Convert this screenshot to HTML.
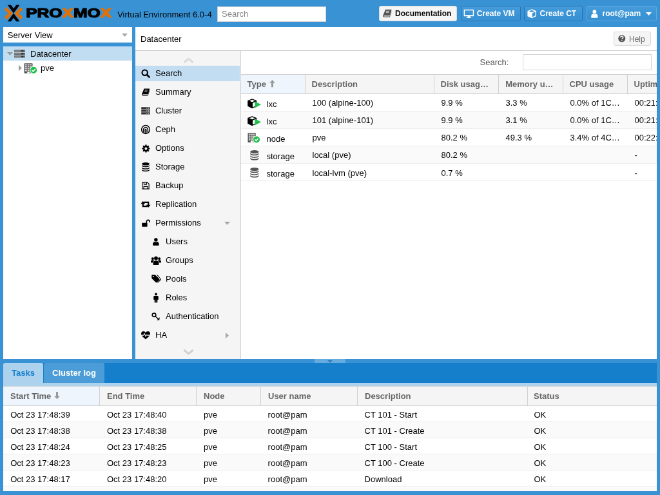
<!DOCTYPE html>
<html><head><meta charset="utf-8"><title>pve - Proxmox Virtual Environment</title>
<style>
html,body{margin:0;padding:0;width:660px;height:495px;overflow:hidden;background:#3892d4}
#r{will-change:transform;position:absolute;left:0;top:0;width:1024px;height:768px;transform:scale(.64453125);transform-origin:0 0;background:#3892d4;font-family:"Liberation Sans",sans-serif;font-size:13px;color:#000;overflow:hidden}
#r div,#r span{position:absolute;box-sizing:border-box;white-space:nowrap}
#r svg{position:absolute;overflow:visible}
.btn{border-radius:3px;font-size:12px;font-weight:bold;line-height:16px}
.bb{background:linear-gradient(#479cda,#3892d4 70%);border:1px solid #2675b8;color:#fff}
.bg{background:#f5f5f5;border:1px solid #d8d8d8;color:#0a0a0a}
.t{line-height:15px}
.hd{background:#f5f5f5;border-right:1px solid #d0d0d0;color:#666;font-weight:bold;height:28.500px;top:0}
.hd span{left:10px;top:7.200px;line-height:15px}
.row{left:0;width:100%;border-bottom:1px solid #ededed}
.alt{background:#fafafa}
.c{line-height:15px}
.ni{left:0;width:162px;height:24px}
.ni span{top:4px;line-height:16px}
</style></head><body>
<div id="r">
<!-- HEADER -->
<div id="hdr" style="left:0;top:0;width:1024px;height:41px">
 <svg style="left:0;top:0" width="180" height="41" viewBox="0 0 180 41"><g fill="none" stroke-linejoin="miter" stroke-miterlimit="6"><path fill="#000" stroke="none" d="M11.730 7.800H17.070L21.100 13.280 25.130 7.800H30.470L21.100 20.530zM11.730 33.300H17.070L21.100 27.830 25.130 33.300H30.470L21.100 20.570z"/><path stroke="#e57000" stroke-width="4.800" d="M8.300 13.100L16.400 20.800 8.300 28.500M33.900 13.100L25.800 20.800 33.900 28.500"/></g><text x="40.200" y="27.500" font-family="Liberation Sans, sans-serif" font-weight="bold" font-size="19.600" textLength="133" lengthAdjust="spacingAndGlyphs" stroke-width="1.200" stroke-linejoin="round"><tspan fill="#000" stroke="#000">PRO</tspan><tspan fill="#e57000" stroke="#e57000">X</tspan><tspan fill="#000" stroke="#000">MO</tspan><tspan fill="#e57000" stroke="#e57000">X</tspan></text></svg>
 <div class="t" style="left:182.200px;top:14.600px">Virtual Environment 6.0-4</div>
 <div style="left:337px;top:9.500px;width:169px;height:24px;background:#fff;border:1px solid #cfcfcf"><span style="left:6px;top:3.500px;line-height:16px;color:#888">Search</span></div>
 <div class="btn bg" style="left:588px;top:9px;width:121px;height:24px"><svg style="left:4.4px;top:3.4px" width="15.2" height="15.2" viewBox="0 0 16 16"><path fill="#555" d="M5.3 1.8h9.2c.6 0 .9.4.7 1L12.6 11c-.2.6-.6.9-1.2.9H3.2c-.5 0-.7.5-.3.9.2.2.5.3.9.3h7.6c.5 0 .8-.2 1-.7l2.4-7.6c.4.3.5.8.3 1.3l-2.3 7.3c-.3.8-.9 1.2-1.7 1.2H3.5c-1.3 0-2.3-.9-2.4-2 0-.5.1-.8.3-1.3z"/><path stroke="#f5f5f5" stroke-width=".9" d="M6.6 4.6h5M6 6.6h5"/></svg><span style="left:24px;top:3px">Documentation</span></div>
 <div class="btn bb" style="left:715.300px;top:9px;width:92.300px;height:24px"><svg style="left:2.4px;top:2.6px" width="16.8" height="16.8" viewBox="0 0 16 16"><path fill="#fff" fill-rule="evenodd" d="M1.600 1.600h12.800c.6 0 1 .4 1 1v8c0 .6-.4 1-1 1H1.600c-.6 0-1-.4-1-1v-8c0-.6.4-1 1-1zM2 3v6.800h12V3z"/><path fill="#fff" d="M6.400 11.400h3.200l.5 2h.9c.3 0 .5.200.5.500s-.2.500-.5.500H5c-.3 0-.5-.2-.5-.5s.2-.5.500-.5h.9z"/></svg><span style="left:23.500px;top:3px">Create VM</span></div>
 <div class="btn bb" style="left:813px;top:9px;width:91px;height:24px"><svg style="left:2.64px;top:2.84px" width="16.32" height="16.32" viewBox="0 0 16 16"><path fill="#fff" d="M8 1.300l6.600 2.600v8L8 15l-6.600-3.100v-8z"/><path fill="#3892d4" d="M8 2.700L3.900 4.300 8 6l4.100-1.700zM8.700 7.200v6l4.500-2.100V5.300z"/></svg><span style="left:23.500px;top:3px">Create CT</span></div>
 <div class="btn bb" style="left:910px;top:9px;width:109px;height:24px;border-color:#62a9de"><svg style="left:4.14px;top:3.64px" width="14.72" height="14.72" viewBox="0 0 16 16"><circle cx="8" cy="4.6" r="3.2" fill="#fff"/><path fill="#fff" d="M2.4 14.2c-.3-3.6 1-5.8 3.2-6.2.7.6 1.5.9 2.4.9s1.7-.3 2.4-.9c2.2.4 3.5 2.600 3.2 6.2-.1.5-.5.8-1.1.8H3.500c-.6 0-1-.3-1.100-.8z"/></svg><span style="left:23.500px;top:3px">root@pam</span><svg style="left:91.0px;top:9.0px" width="9.0" height="5.0" viewBox="0 0 9 5"><path fill="#fff" d="M0 0h9L4.500 5z"/></svg></div>
</div>

<!-- LEFT PANEL -->
<div id="combo" style="left:5px;top:41.500px;width:200px;height:24px;background:#fff"><span class="t" style="left:6.800px;top:5.600px">Server View</span><svg style="left:183.5px;top:10.0px" width="9.0" height="5.0" viewBox="0 0 9 5"><path fill="#a8a8a8" d="M0 0h9L4.500 5z"/></svg></div>
<div id="tree" style="left:5px;top:71.500px;width:200px;height:485.500px;background:#fff">
 <div style="left:0;top:0;width:200px;height:22.600px;background:#c1ddf1"><svg style="left:6.2px;top:9.6px" width="9.0" height="5.0" viewBox="0 0 9 5"><path fill="#9a9a9a" d="M0 0h9L4.500 5z"/></svg><svg style="left:16.65px;top:5.8px" width="17.0" height="13.0" viewBox="0 0 17 13"><rect x="0" y="0.3" width="17" height="3.400" rx=".5" fill="#6e6e6e"/><rect x="11" y="0.8999999999999999" width="3.400" height="2.200" fill="#2e2e2e"/><rect x=".8" y="1.6" width="9.400" height=".8" fill="#999"/><rect x="0" y="4.7" width="17" height="3.400" rx=".5" fill="#6e6e6e"/><rect x="11" y="5.3" width="3.400" height="2.200" fill="#2e2e2e"/><rect x=".8" y="6.0" width="9.400" height=".8" fill="#999"/><rect x="0" y="9.1" width="17" height="3.400" rx=".5" fill="#6e6e6e"/><rect x="11" y="9.7" width="3.400" height="2.200" fill="#2e2e2e"/><rect x=".8" y="10.4" width="9.400" height=".8" fill="#999"/></svg><span class="t" style="left:42px;top:4.500px">Datacenter</span></div>
 <div style="left:0;top:22.600px;width:200px;height:23px"><svg style="left:24.0px;top:7.3px" width="5.0" height="9.0" viewBox="0 0 5 9"><path fill="#9a9a9a" d="M0 0v9l5-4.500z"/></svg><svg style="left:31.18px;top:2.64px" width="24.64" height="17.92" viewBox="0 0 22 16"><path fill="#555" d="M2 1.200h10.400c.4 0 .6.200.6.600v12.600c0 .4-.2.600-.6.600H2c-.4 0-.6-.2-.6-.6V1.800c0-.4.200-.6.600-.6z"/><rect x="2.7" y="2.5" width="2.500" height="1.500" fill="#fff" opacity=".85"/><rect x="5.95" y="2.5" width="2.500" height="1.500" fill="#fff" opacity=".85"/><rect x="9.2" y="2.5" width="2.500" height="1.500" fill="#fff" opacity=".85"/><rect x="2.7" y="5.2" width="2.500" height="1.500" fill="#fff" opacity=".85"/><rect x="5.95" y="5.2" width="2.500" height="1.500" fill="#fff" opacity=".85"/><rect x="9.2" y="5.2" width="2.500" height="1.500" fill="#fff" opacity=".85"/><rect x="2.7" y="7.9" width="2.500" height="1.500" fill="#fff" opacity=".85"/><rect x="5.95" y="7.9" width="2.500" height="1.500" fill="#fff" opacity=".85"/><rect x="9.2" y="7.9" width="2.500" height="1.500" fill="#fff" opacity=".85"/><rect x="2.7" y="10.6" width="2.500" height="1.500" fill="#fff" opacity=".85"/><rect x="5.95" y="10.6" width="2.500" height="1.500" fill="#fff" opacity=".85"/><rect x="9.2" y="10.6" width="2.500" height="1.500" fill="#fff" opacity=".85"/><rect x="5.600" y="13" width="3.200" height="2" fill="#fff"/><circle cx="14.4" cy="10.6" r="5.4" fill="#fff"/><circle cx="14.4" cy="10.6" r="4.5" fill="#21bf4b"/><path fill="none" stroke="#fff" stroke-width="1.500" d="M12.100000000000001 10.7l1.700 1.700 2.900-3.200"/></svg><span class="t" style="left:58px;top:4px">pve</span></div>
</div>

<!-- CENTER PANEL -->
<div id="center" style="left:210px;top:41.500px;width:809px;height:515.500px;background:#fff">
 <div id="ctitle" style="left:0;top:0;width:809px;height:37.500px;border-bottom:1px solid #cecece"><span class="t" style="left:8px;top:11.500px">Datacenter</span>
  <div class="btn bg" style="left:742px;top:7.500px;width:58px;height:21.800px;color:#666;font-weight:normal"><svg style="left:4.7px;top:3.4px" width="13.6" height="13.6" viewBox="0 0 16 16"><circle cx="8" cy="8" r="6.500" fill="#555"/><path fill="none" stroke="#f5f5f5" stroke-width="1.700" d="M5.600 6.200c0-1.400 1-2.300 2.400-2.300s2.400.9 2.400 2.100c0 1.600-2.300 1.700-2.300 3.400"/><circle cx="8.100" cy="11.800" r="1.050" fill="#f5f5f5"/></svg><span style="left:23px;top:2.500px">Help</span></div>
 </div>
 <div id="nav" style="left:0;top:37.500px;width:163.500px;height:478px;background:#f5f5f5;border-right:1px solid #cfcfcf">
  <svg style="left:73.5px;top:9.5px" width="17.0" height="10.0" viewBox="0 0 17 10"><path fill="none" stroke="#dadada" stroke-width="3" stroke-linejoin="round" d="M1.500 8l7-5.800 7 5.800"/></svg><div class="ni" style="top:23.0px;background:#c2ddf2;"><svg style="left:8.0px;top:4.0px" width="16.0" height="16.0" viewBox="0 0 16 16"><circle cx="6.7" cy="6.7" r="4.2" fill="none" stroke="#000" stroke-width="2.1"/><path d="M10 10L13.6 13.6" stroke="#000" stroke-width="2.7" stroke-linecap="round"/></svg><span style="left:31px">Search</span></div><div class="ni" style="top:52.0px;"><svg style="left:9.12px;top:5.12px" width="13.76" height="13.76" viewBox="0 0 16 16"><path fill="#000" d="M5.3 1.8h9.2c.6 0 .9.4.7 1L12.6 11c-.2.6-.6.9-1.2.9H3.2c-.5 0-.7.5-.3.9.2.2.5.3.9.3h7.6c.5 0 .8-.2 1-.7l2.4-7.6c.4.3.5.8.3 1.3l-2.3 7.3c-.3.8-.9 1.2-1.7 1.2H3.5c-1.3 0-2.3-.9-2.4-2 0-.5.1-.8.3-1.3z"/><path stroke="#f5f5f5" stroke-width=".9" d="M6.6 4.6h5M6 6.6h5"/></svg><span style="left:31px">Summary</span></div><div class="ni" style="top:81.0px;"><svg style="left:8.0px;top:4.0px" width="16.0" height="16.0" viewBox="0 0 16 16"><rect x="1.200" y="2.3" width="13.600" height="3.300" rx=".5" fill="#333"/><rect x="11.300" y="3.4" width="1.800" height="1.100" fill="#f5f5f5"/><rect x="8.600" y="3.4" width="1.800" height="1.100" fill="#f5f5f5" opacity=".6"/><rect x="1.200" y="6.3" width="13.600" height="3.300" rx=".5" fill="#333"/><rect x="11.300" y="7.4" width="1.800" height="1.100" fill="#f5f5f5"/><rect x="8.600" y="7.4" width="1.800" height="1.100" fill="#f5f5f5" opacity=".6"/><rect x="1.200" y="10.3" width="13.600" height="3.300" rx=".5" fill="#333"/><rect x="11.300" y="11.4" width="1.800" height="1.100" fill="#f5f5f5"/><rect x="8.600" y="11.4" width="1.800" height="1.100" fill="#f5f5f5" opacity=".6"/></svg><span style="left:31px">Cluster</span></div><div class="ni" style="top:110.0px;"><svg style="left:8.0px;top:4.0px" width="16.0" height="16.0" viewBox="0 0 16 16"><g fill="none" stroke="#000"><circle cx="8" cy="8" r="6.400" stroke-width="1.500"/><path d="M4.600 12.600V8.200a3.400 3.400 0 0 1 6.800 0v4.400" stroke-width="1.500"/><path d="M7.100 13.800V8.400a.9.900 0 0 1 1.800 0v5.400" stroke-width="1.300"/></g></svg><span style="left:31px">Ceph</span></div><div class="ni" style="top:139.0px;"><svg style="left:8.56px;top:4.56px" width="14.88" height="14.88" viewBox="0 0 16 16"><path fill="#000" fill-rule="evenodd" d="M14.50 6.87 L14.50 9.13 L12.74 9.26 L12.24 10.46 L13.40 11.80 L11.80 13.40 L10.46 12.24 L9.26 12.74 L9.13 14.50 L6.87 14.50 L6.74 12.74 L5.54 12.24 L4.20 13.40 L2.60 11.80 L3.76 10.46 L3.26 9.26 L1.50 9.13 L1.50 6.87 L3.26 6.74 L3.76 5.54 L2.60 4.20 L4.20 2.60 L5.54 3.76 L6.74 3.26 L6.87 1.50 L9.13 1.50 L9.26 3.26 L10.46 3.76 L11.80 2.60 L13.40 4.20 L12.24 5.54 L12.74 6.74Z M10.2 8 a2.2 2.2 0 1 0 -4.4 0 a2.2 2.2 0 1 0 4.4 0Z"/></svg><span style="left:31px">Options</span></div><div class="ni" style="top:168.0px;"><svg style="left:8.0px;top:4.0px" width="16.0" height="16.0" viewBox="0 0 16 16"><ellipse cx="8" cy="3.3" rx="6" ry="2.3" fill="#000"/><path fill="#000" d="M2 4.6c0 1.4 2.7 2.3 6 2.3s6-.9 6-2.3v1.5c0 1.4-2.7 2.4-6 2.4s-6-1-6-2.4z"/><path fill="#000" d="M2 7.9c0 1.4 2.7 2.3 6 2.3s6-.9 6-2.3v1.5c0 1.4-2.7 2.4-6 2.4s-6-1-6-2.4z"/><path fill="#000" d="M2 11.2c0 1.4 2.7 2.3 6 2.3s6-.9 6-2.3v1.5c0 1.4-2.7 2.4-6 2.4s-6-1-6-2.4z"/></svg><span style="left:31px">Storage</span></div><div class="ni" style="top:197.0px;"><svg style="left:8.96px;top:4.96px" width="14.08" height="14.08" viewBox="0 0 16 16"><g fill="none" stroke="#000" stroke-width="1.3"><path d="M2.2 2.2h8.6l3 3v8.6H2.2z"/><path d="M5 2.4v3.4h4.6V2.4M4.6 13.6V9.6h6.8v4"/></g></svg><span style="left:31px">Backup</span></div><div class="ni" style="top:226.0px;"><svg style="left:8.0px;top:4.0px" width="16.0" height="16.0" viewBox="0 0 16 16"><g fill="none" stroke="#000" stroke-width="2.200"><path d="M3.800 6.500v4.600h7"/><path d="M12.200 9.500V4.900h-7"/></g><path fill="#000" d="M.4 7.200L3.800 3 7.200 7.200zM8.800 8.800l3.400 4.200 3.400-4.200z"/></svg><span style="left:31px">Replication</span></div><div class="ni" style="top:255.0px;"><svg style="left:8.8px;top:4.8px" width="14.4" height="14.4" viewBox="0 0 16 16"><rect x="1.3" y="7.6" width="9.4" height="6.6" rx=".9" fill="#000"/><path fill="none" stroke="#000" stroke-width="1.8" d="M9.3 7.8V5.2a2.6 2.6 0 0 1 5.2 0v1.6"/></svg><span style="left:31px">Permissions</span><svg style="left:138.0px;top:10.0px" width="9.0" height="5.0" viewBox="0 0 9 5"><path fill="#a8a8a8" d="M0 0h9L4.500 5z"/></svg></div><div class="ni" style="top:284.0px;"><svg style="left:25.12px;top:5.12px" width="13.76" height="13.76" viewBox="0 0 16 16"><circle cx="8" cy="4.6" r="3.2" fill="#000"/><path fill="#000" d="M2.4 14.2c-.3-3.6 1-5.8 3.2-6.2.7.6 1.5.9 2.4.9s1.7-.3 2.4-.9c2.2.4 3.5 2.600 3.2 6.2-.1.5-.5.8-1.1.8H3.500c-.6 0-1-.3-1.100-.8z"/></svg><span style="left:47px">Users</span></div><div class="ni" style="top:313.0px;"><svg style="left:24.0px;top:4.0px" width="16.0" height="16.0" viewBox="0 0 16 16"><circle cx="2.900" cy="5.200" r="2" fill="#000"/><circle cx="13.100" cy="5.200" r="2" fill="#000"/><path fill="#000" d="M0 11.400V9.600c0-1.300.9-2.200 2.200-2.200h1.400c.5 0 1 .2 1.400.5-1 .8-1.600 2-1.700 3.500zM16 11.400V9.600c0-1.300-.9-2.200-2.200-2.200h-1.400c-.5 0-1 .2-1.400.5 1 .8 1.600 2 1.700 3.500z"/><circle cx="8" cy="4.700" r="2.900" fill="#000"/><path fill="#000" d="M3.600 14.200v-2.500c0-1.900 1.300-3.300 3.100-3.300h2.600c1.800 0 3.100 1.400 3.100 3.300v2.500c0 .5-.3.800-.8.800H4.400c-.5 0-.8-.3-.8-.8z"/></svg><span style="left:47px">Groups</span></div><div class="ni" style="top:342.0px;"><svg style="left:24.0px;top:4.0px" width="16.0" height="16.0" viewBox="0 0 16 16"><path fill="#000" d="M1.3 2.6c0-.6.4-1 1-1h4c.5 0 1 .2 1.400.6l5.600 5.600c.4.4.4 1 0 1.400l-4 4c-.4.4-1 .4-1.400 0L2 7.600c-.4-.4-.7-.9-.7-1.400z"/><circle cx="3.800" cy="4.100" r="1" fill="#f5f5f5"/><path fill="#000" d="M9 1.600h.9c.5 0 1 .2 1.400.6l4.400 5.600c.4.4.4 1 0 1.400l-4 4c-.4.4-1 .4-1.400 0l-.2-.2 4.300-4.300c.4-.4.4-1 0-1.400z"/></svg><span style="left:47px">Pools</span></div><div class="ni" style="top:371.0px;"><svg style="left:24.0px;top:4.0px" width="16.0" height="16.0" viewBox="0 0 16 16"><circle cx="8" cy="2.500" r="1.900" fill="#000"/><path fill="#000" d="M4.200 6.600c0-1 .7-1.700 1.700-1.700h4.200c1 0 1.700.7 1.700 1.700v3.700c0 .5-.3.800-.8.800h-.7v3.800c0 .4-.3.700-.7.700h-.7c-.4 0-.7-.3-.7-.7v-3.400h-.4v3.400c0 .4-.3.700-.7.700h-.7c-.4 0-.7-.3-.7-.7v-3.800H5c-.5 0-.8-.3-.8-.8z"/></svg><span style="left:47px">Roles</span></div><div class="ni" style="top:400.0px;"><svg style="left:24.0px;top:4.0px" width="16.0" height="16.0" viewBox="0 0 16 16"><circle cx="5" cy="5.600" r="2.800" fill="none" stroke="#000" stroke-width="1.700"/><path fill="none" stroke="#000" stroke-width="1.400" d="M7.100 7.700l6.200 5.900M10.300 13.700l1.700-1.800M12.400 11.400l1.400-1.400" /></svg><span style="left:47px">Authentication</span></div><div class="ni" style="top:429.0px;"><svg style="left:8.0px;top:4.0px" width="16.0" height="16.0" viewBox="0 0 16 16"><path fill="#000" d="M8 14.400C6.600 13.200 1 9.400 1 5.600 1 3.400 2.600 1.900 4.600 1.900c1.400 0 2.600.7 3.400 2 .8-1.300 2-2 3.400-2 2 0 3.600 1.500 3.600 3.700 0 3.800-5.600 7.600-7 8.800z"/><path fill="none" stroke="#f5f5f5" stroke-width="1.100" stroke-linejoin="round" d="M1.500 8.100h3.300l1.300-2.600 2 4.600 1.400-2.600 1 .6h4"/></svg><span style="left:31px">HA</span><svg style="left:140.0px;top:8.0px" width="5.0" height="9.0" viewBox="0 0 5 9"><path fill="#a8a8a8" d="M0 0v9l5-4.500z"/></svg></div><svg style="left:73.5px;top:461.5px" width="17.0" height="10.0" viewBox="0 0 17 10"><path fill="none" stroke="#cfcfcf" stroke-width="3" stroke-linejoin="round" d="M1.500 2l7 5.800 7-5.800"/></svg>
 </div>
 <div id="content" style="left:163.500px;top:37.500px;width:645.500px;height:478px;overflow:hidden">
  <span class="t" style="left:371px;top:9.700px;color:#555">Search:</span>
  <div style="left:437.300px;top:5px;width:200.500px;height:25px;border:1px solid #d4d4d4;background:#fff"></div>
  <div id="ghead" style="left:0;top:36px;width:900px;height:30.500px;border-top:1px solid #cfcfcf;border-bottom:1px solid #cfcfcf;background:#f5f5f5">
   <div class="hd" style="left:0;width:100px;background:#eef5fc"><span>Type</span><svg style="left:44.0px;top:8.3px" width="9.0" height="12.0" viewBox="0 0 9 12"><path fill="#999" d="M4.500 0L9 4.800H6v6.500H3V4.800H0z"/></svg></div>
   <div class="hd" style="left:100px;width:200px"><span>Description</span></div>
   <div class="hd" style="left:300px;width:100px"><span>Disk usag…</span></div>
   <div class="hd" style="left:400px;width:100px"><span style="left:10.700px">Memory u…</span></div>
   <div class="hd" style="left:500px;width:100px"><span>CPU usage</span></div>
   <div class="hd" style="left:600px;width:100px"><span>Uptime</span></div>
  </div>
  <div id="gbody" style="left:0;top:66.500px;width:900px;height:400px">
   <div class="row" style="top:0.0px;height:27.15px"><svg style="left:9.4px;top:7.3px" width="24.0" height="16.0" viewBox="0 0 24 16"><path fill="#000" d="M8.200 .2l7 2.800v8.800L8.200 15.300 1.200 11.800V3z"/><path fill="#fff" d="M8.200 1.700L3.800 3.500l4.400 1.800 4.400-1.800zM9 6.700v6.800l4.900-2.400V4.700z"/><path fill="#21bf4b" d="M12.400 4.200l9.600 5.100-9.600 5.100z"/></svg><span class="c" style="left:40px;top:8px">lxc</span><span class="c" style="left:111px;top:6.5px">100 (alpine-100)</span><span class="c" style="left:311px;top:6.5px">9.9 %</span><span class="c" style="left:411px;top:6.5px">3.3 %</span><span class="c" style="left:511px;top:6.5px">0.0% of 1C…</span><span class="c" style="left:611px;top:6.5px">00:21:47</span></div><div class="row alt" style="top:27.15px;height:27.15px"><svg style="left:9.4px;top:7.3px" width="24.0" height="16.0" viewBox="0 0 24 16"><path fill="#000" d="M8.200 .2l7 2.800v8.800L8.200 15.300 1.200 11.800V3z"/><path fill="#fafafa" d="M8.200 1.700L3.800 3.500l4.400 1.800 4.400-1.800zM9 6.700v6.800l4.900-2.400V4.700z"/><path fill="#21bf4b" d="M12.400 4.200l9.600 5.100-9.600 5.100z"/></svg><span class="c" style="left:40px;top:8px">lxc</span><span class="c" style="left:111px;top:6.5px">101 (alpine-101)</span><span class="c" style="left:311px;top:6.5px">9.9 %</span><span class="c" style="left:411px;top:6.5px">3.1 %</span><span class="c" style="left:511px;top:6.5px">0.0% of 1C…</span><span class="c" style="left:611px;top:6.5px">00:21:35</span></div><div class="row" style="top:54.3px;height:27.15px"><svg style="left:9.54px;top:5.12px" width="23.32" height="16.96" viewBox="0 0 22 16"><path fill="#555" d="M2 1.200h10.400c.4 0 .6.200.6.600v12.600c0 .4-.2.600-.6.600H2c-.4 0-.6-.2-.6-.6V1.800c0-.4.200-.6.600-.6z"/><rect x="2.7" y="2.5" width="2.500" height="1.500" fill="#fff" opacity=".85"/><rect x="5.95" y="2.5" width="2.500" height="1.500" fill="#fff" opacity=".85"/><rect x="9.2" y="2.5" width="2.500" height="1.500" fill="#fff" opacity=".85"/><rect x="2.7" y="5.2" width="2.500" height="1.500" fill="#fff" opacity=".85"/><rect x="5.95" y="5.2" width="2.500" height="1.500" fill="#fff" opacity=".85"/><rect x="9.2" y="5.2" width="2.500" height="1.500" fill="#fff" opacity=".85"/><rect x="2.7" y="7.9" width="2.500" height="1.500" fill="#fff" opacity=".85"/><rect x="5.95" y="7.9" width="2.500" height="1.500" fill="#fff" opacity=".85"/><rect x="9.2" y="7.9" width="2.500" height="1.500" fill="#fff" opacity=".85"/><rect x="2.7" y="10.6" width="2.500" height="1.500" fill="#fff" opacity=".85"/><rect x="5.95" y="10.6" width="2.500" height="1.500" fill="#fff" opacity=".85"/><rect x="9.2" y="10.6" width="2.500" height="1.500" fill="#fff" opacity=".85"/><rect x="5.600" y="13" width="3.200" height="2" fill="#fff"/><circle cx="14.2" cy="10.8" r="5.6000000000000005" fill="#fff"/><circle cx="14.2" cy="10.8" r="4.7" fill="#21bf4b"/><path fill="none" stroke="#fff" stroke-width="1.500" d="M11.899999999999999 10.9l1.700 1.700 2.900-3.200"/></svg><span class="c" style="left:40px;top:8px">node</span><span class="c" style="left:111px;top:6.5px">pve</span><span class="c" style="left:311px;top:6.5px">80.2 %</span><span class="c" style="left:411px;top:6.5px">49.3 %</span><span class="c" style="left:511px;top:6.5px">3.4% of 4C…</span><span class="c" style="left:611px;top:6.5px">00:22:50</span></div><div class="row alt" style="top:81.45px;height:27.15px"><svg style="left:12.2px;top:5.0px" width="17.6" height="17.6" viewBox="0 0 16 16"><ellipse cx="8" cy="3.3" rx="6" ry="2.3" fill="#555"/><path fill="#555" d="M2 4.6c0 1.4 2.7 2.3 6 2.3s6-.9 6-2.3v1.5c0 1.4-2.7 2.4-6 2.4s-6-1-6-2.4z"/><path fill="#555" d="M2 7.9c0 1.4 2.7 2.3 6 2.3s6-.9 6-2.3v1.5c0 1.4-2.7 2.4-6 2.4s-6-1-6-2.4z"/><path fill="#555" d="M2 11.2c0 1.4 2.7 2.3 6 2.3s6-.9 6-2.3v1.5c0 1.4-2.7 2.4-6 2.4s-6-1-6-2.4z"/></svg><span class="c" style="left:40px;top:8px">storage</span><span class="c" style="left:111px;top:6.5px">local (pve)</span><span class="c" style="left:311px;top:6.5px">80.2 %</span><span class="c" style="left:611px;top:6.5px">-</span></div><div class="row" style="top:108.6px;height:27.15px"><svg style="left:12.2px;top:5.0px" width="17.6" height="17.6" viewBox="0 0 16 16"><ellipse cx="8" cy="3.3" rx="6" ry="2.3" fill="#555"/><path fill="#555" d="M2 4.6c0 1.4 2.7 2.3 6 2.3s6-.9 6-2.3v1.5c0 1.4-2.7 2.4-6 2.4s-6-1-6-2.4z"/><path fill="#555" d="M2 7.9c0 1.4 2.7 2.3 6 2.3s6-.9 6-2.3v1.5c0 1.4-2.7 2.4-6 2.4s-6-1-6-2.4z"/><path fill="#555" d="M2 11.2c0 1.4 2.7 2.3 6 2.3s6-.9 6-2.3v1.5c0 1.4-2.7 2.4-6 2.4s-6-1-6-2.4z"/></svg><span class="c" style="left:40px;top:8px">storage</span><span class="c" style="left:111px;top:6.5px">local-lvm (pve)</span><span class="c" style="left:311px;top:6.5px">0.7 %</span><span class="c" style="left:611px;top:6.5px">-</span></div>
  </div>
 </div>
</div>
<!-- splitter mini tool -->
<div style="left:488px;top:557px;width:47.500px;height:5.500px;background:#66abe0"><svg style="left:19.500px;top:1.500px" width="8" height="4" viewBox="0 0 8 4"><path fill="#2a7cc0" d="M0 0h8L4 4z"/></svg></div>

<!-- BOTTOM PANEL -->
<div id="bottom" style="left:5px;top:563px;width:1014px;height:198.500px;background:#fff;overflow:hidden">
 <div id="tabbar" style="left:0;top:0;width:1014px;height:31px;background:#157fcc">
  <div style="left:0;top:0;width:62px;height:31px;background:#add2ed;color:#157fcc;font-weight:bold;border-radius:3px 3px 0 0"><span class="t" style="left:13px;top:8px">Tasks</span></div>
  <div style="left:63px;top:0;width:94px;height:31px;background:#4b9cd7;color:#fff;font-weight:bold;border-radius:3px 3px 0 0"><span class="t" style="left:13px;top:8px">Cluster log</span></div>
 </div>
 <div style="left:0;top:31px;width:1014px;height:6px;background:#add2ed"></div>
 <div id="bhead" style="left:0;top:36px;width:1014px;height:31px;border-top:1px solid #d6d6d6;border-bottom:1px solid #cfcfcf;background:#f5f5f5">
  <div class="hd" style="left:0;width:150px;background:#eef5fc"><span style="left:11px">Start Time</span><svg style="left:78.5px;top:8.3px" width="9.0" height="12.0" viewBox="0 0 9 12"><path fill="#999" d="M4.500 11.300L9 6.500H6V0H3v6.500H0z"/></svg></div>
  <div class="hd" style="left:150px;width:150px"><span style="left:11px">End Time</span></div>
  <div class="hd" style="left:300px;width:100px"><span style="left:11px">Node</span></div>
  <div class="hd" style="left:400px;width:150px"><span style="left:11px">User name</span></div>
  <div class="hd" style="left:550px;width:264px"><span style="left:11px">Description</span></div>
  <div class="hd" style="left:814px;width:200px;border-right:0"><span style="left:9px">Status</span></div>
 </div>
 <div id="bbody" style="left:0;top:67px;width:1014px;height:140px">
  <div class="row" style="top:0.0px;height:25.100px"><span class="c" style="left:11.2px;top:5.900px">Oct 23 17:48:39</span><span class="c" style="left:161px;top:5.900px">Oct 23 17:48:40</span><span class="c" style="left:311px;top:5.900px">pve</span><span class="c" style="left:410.6px;top:5.900px">root@pam</span><span class="c" style="left:560.6px;top:5.900px">CT 101 - Start</span><span class="c" style="left:823.5px;top:5.900px">OK</span></div><div class="row alt" style="top:25.1px;height:25.100px"><span class="c" style="left:11.2px;top:5.900px">Oct 23 17:48:38</span><span class="c" style="left:161px;top:5.900px">Oct 23 17:48:38</span><span class="c" style="left:311px;top:5.900px">pve</span><span class="c" style="left:410.6px;top:5.900px">root@pam</span><span class="c" style="left:560.6px;top:5.900px">CT 101 - Create</span><span class="c" style="left:823.5px;top:5.900px">OK</span></div><div class="row" style="top:50.2px;height:25.100px"><span class="c" style="left:11.2px;top:5.900px">Oct 23 17:48:24</span><span class="c" style="left:161px;top:5.900px">Oct 23 17:48:25</span><span class="c" style="left:311px;top:5.900px">pve</span><span class="c" style="left:410.6px;top:5.900px">root@pam</span><span class="c" style="left:560.6px;top:5.900px">CT 100 - Start</span><span class="c" style="left:823.5px;top:5.900px">OK</span></div><div class="row alt" style="top:75.3px;height:25.100px"><span class="c" style="left:11.2px;top:5.900px">Oct 23 17:48:23</span><span class="c" style="left:161px;top:5.900px">Oct 23 17:48:23</span><span class="c" style="left:311px;top:5.900px">pve</span><span class="c" style="left:410.6px;top:5.900px">root@pam</span><span class="c" style="left:560.6px;top:5.900px">CT 100 - Create</span><span class="c" style="left:823.5px;top:5.900px">OK</span></div><div class="row" style="top:100.4px;height:25.100px"><span class="c" style="left:11.2px;top:5.900px">Oct 23 17:48:17</span><span class="c" style="left:161px;top:5.900px">Oct 23 17:48:20</span><span class="c" style="left:311px;top:5.900px">pve</span><span class="c" style="left:410.6px;top:5.900px">root@pam</span><span class="c" style="left:560.6px;top:5.900px">Download</span><span class="c" style="left:823.5px;top:5.900px">OK</span></div><div class="row alt" style="top:125.500px;height:25px"></div>
 </div>
</div>
</div>
</body></html>
